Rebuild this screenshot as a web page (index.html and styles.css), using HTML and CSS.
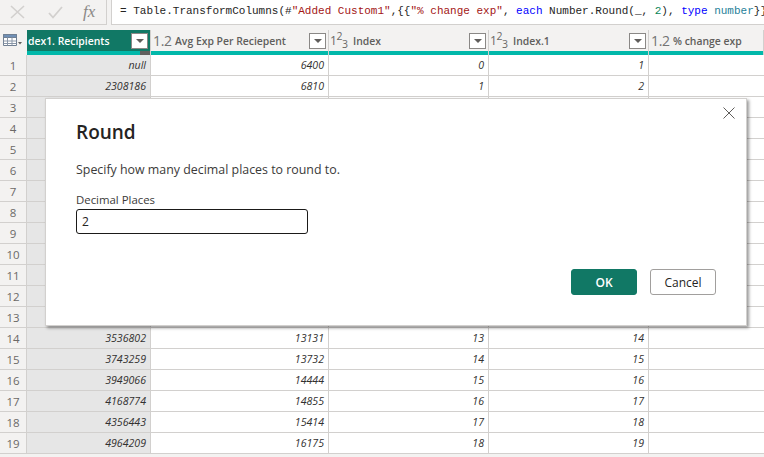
FILE: index.html
```html
<!DOCTYPE html>
<html lang="en">
<head>
<meta charset="utf-8">
<title>Round</title>
<link rel="stylesheet" href="styles.css">
</head>
<body>
<div class="page">
  <div class="formula-bar">
    <div class="formula-tools">
      <svg class="tool" width="16" height="14" viewBox="0 0 16 14"><path d="M1 1l13 12M14 1L1 13" fill="none" stroke="#d2d0ce" stroke-width="1.6"/></svg>
      <svg class="tool" width="15" height="14" viewBox="0 0 15 14"><path d="M1 8l4 4.500L14 2" fill="none" stroke="#d2d0ce" stroke-width="1.8"/></svg>
      <span class="fx">fx</span>
    </div>
    <div class="formula">= Table.TransformColumns(#<span class="str">"Added Custom1"</span>,{{<span class="str">"% change exp"</span>, <span class="kw">each</span> Number.Round(_, <span class="num">2</span>), <span class="kw">type</span> <span class="typ">number</span>}}</div>
  </div>
  <table class="grid">
    <colgroup><col class="c0"><col class="c1"><col class="c2"><col class="c3"><col class="c4"><col class="c5"></colgroup>
    <thead>
      <tr class="head">
        <th class="corner"><svg width="20" height="14" viewBox="0 0 20 14"><path d="M.500.500h13v11H.500z" fill="#fff" stroke="#6f7f92"/><path d="M.500.500h13v3H.500z" fill="#6f8fb5" stroke="#6f7f92"/><path d="M.500 7h13M.500 9.500h13M4.500 3.500v8M9 3.500v8" stroke="#8a97a8" fill="none"/><path d="M15 8h4l-2 2.500z" fill="#605e5c"/></svg></th>
        <th class="selected"><div class="hc"><span class="name sel-name">dex1. Recipients</span><span class="filter"></span></div></th>
        <th><div class="hc"><span class="dec">1.2</span><span class="name">Avg Exp Per Reciepent</span><span class="filter"></span></div></th>
        <th><div class="hc"><span class="int">1<sup>2</sup><sub>3</sub></span><span class="name">Index</span><span class="filter"></span></div></th>
        <th><div class="hc"><span class="int">1<sup>2</sup><sub>3</sub></span><span class="name">Index.1</span><span class="filter"></span></div></th>
        <th><div class="hc"><span class="dec">1.2</span><span class="name">% change exp</span></div></th>
      </tr>
      <tr class="quality">
        <th class="q0"></th>
        <th class="q q1"><span class="qgap"></span></th>
        <th class="q"></th><th class="q"></th><th class="q"></th><th class="q"></th>
      </tr>
    </thead>
    <tbody>
      <tr><th>1</th><td class="sel">null</td><td>6400</td><td>0</td><td>1</td><td></td></tr>
      <tr><th>2</th><td class="sel">2308186</td><td>6810</td><td>1</td><td>2</td><td></td></tr>
      <tr><th>3</th><td class="sel"></td><td></td><td></td><td></td><td></td></tr>
      <tr><th>4</th><td class="sel"></td><td></td><td></td><td></td><td></td></tr>
      <tr><th>5</th><td class="sel"></td><td></td><td></td><td></td><td></td></tr>
      <tr><th>6</th><td class="sel"></td><td></td><td></td><td></td><td></td></tr>
      <tr><th>7</th><td class="sel"></td><td></td><td></td><td></td><td></td></tr>
      <tr><th>8</th><td class="sel"></td><td></td><td></td><td></td><td></td></tr>
      <tr><th>9</th><td class="sel"></td><td></td><td></td><td></td><td></td></tr>
      <tr><th>10</th><td class="sel"></td><td></td><td></td><td></td><td></td></tr>
      <tr><th>11</th><td class="sel"></td><td></td><td></td><td></td><td></td></tr>
      <tr><th>12</th><td class="sel"></td><td></td><td></td><td></td><td></td></tr>
      <tr><th>13</th><td class="sel"></td><td></td><td></td><td></td><td></td></tr>
      <tr><th>14</th><td class="sel">3536802</td><td>13131</td><td>13</td><td>14</td><td></td></tr>
      <tr><th>15</th><td class="sel">3743259</td><td>13732</td><td>14</td><td>15</td><td></td></tr>
      <tr><th>16</th><td class="sel">3949066</td><td>14444</td><td>15</td><td>16</td><td></td></tr>
      <tr><th>17</th><td class="sel">4168774</td><td>14855</td><td>16</td><td>17</td><td></td></tr>
      <tr><th>18</th><td class="sel">4356443</td><td>15414</td><td>17</td><td>18</td><td></td></tr>
      <tr><th>19</th><td class="sel">4964209</td><td>16175</td><td>18</td><td>19</td><td></td></tr>
    </tbody>
  </table>
  <div class="dialog">
    <svg class="close" width="12" height="12" viewBox="0 0 12 12"><path d="M.500.500l11 11M11.500.500l-11 11" fill="none" stroke="#605e5c" stroke-width="1"/></svg>
    <h1 class="title">Round</h1>
    <p class="desc">Specify how many decimal places to round to.</p>
    <label class="label" for="places">Decimal Places</label>
    <input class="input" id="places" type="text" value="2">
    <div class="actions">
      <button class="btn primary" type="button">OK</button>
      <button class="btn" type="button">Cancel</button>
    </div>
  </div>
</div>
</body>
</html>
```
FILE: styles.css
```css
* { box-sizing: border-box; }
html, body { margin: 0; padding: 0; background: #fff; }
.page {
  position: relative;
  width: 764px;
  height: 457px;
  overflow: hidden;
  background: #f3f2f1;
  font-family: "Open Sans", "Noto Sans", sans-serif;
}
.formula-bar { display: flex; height: 30px; background: #f3f2f1; }
.formula-tools {
  display: flex;
  align-items: center;
  width: 107px;
  height: 25px;
  padding: 0 0 0 10px;
  gap: 22px;
  background: #f3f2f1;
  border-right: 1px solid #d2d0ce;
  border-bottom: 1px solid #d2d0ce;
}
.fx { font-family: "Liberation Serif", serif; font-style: italic; font-size: 17px; color: #8a8886; margin-left: -2px; }
.formula {
  flex: 1;
  height: 25px;
  margin-left: 4px;
  padding: 3px 0 0 8px;
  background: #fff;
  border-left: 1px solid #d2d0ce;
  border-bottom: 1px solid #d2d0ce;
  font-family: "Liberation Mono", monospace;
  font-size: 11px;
  line-height: 16px;
  white-space: nowrap;
  overflow: hidden;
  color: #252423;
}
.str { color: #a31515; }
.kw { color: #0000ff; }
.num { color: #098658; }
.typ { color: #267f99; }
.grid { border-collapse: separate; border-spacing: 0; table-layout: fixed; width: 764px; }
.c0 { width: 27px; } .c1 { width: 124px; } .c2 { width: 178px; } .c3 { width: 160px; } .c4 { width: 160px; }
.head th {
  height: 21px;
  padding: 0;
  background: #f3f2f1;
  border-right: 1px solid #d2d0ce;
  font-size: 10.4px;
  font-weight: 600;
  color: #605e5c;
  text-align: left;
}
.head th.corner { border-right: 0; padding-left: 3px; line-height: 0; }
.head th.selected { background: #117865; color: #fff; }
.hc { display: flex; align-items: center; height: 21px; padding-right: 2px; overflow: hidden; white-space: nowrap; }
.hc > .name { flex: 1; }
.hc > .sel-name { padding-left: 1px; }
.dec { flex: none; width: 24px; padding-left: 2px; font-size: 14px; letter-spacing: -.3px; font-weight: 400; color: #737373; }
.int { flex: none; width: 24px; padding-left: 1px; font-size: 12px; letter-spacing: -.4px; font-weight: 400; color: #6b6967; line-height: 12px; }
.int sup, .int sub { font-size: 10.5px; line-height: 0; }
.filter { position: relative; flex: none; width: 17px; height: 16px; background: #fff; border: 1px solid #8a8886; }
.filter::after {
  content: "";
  position: absolute;
  left: 4px;
  top: 5px;
  border-left: 4px solid transparent;
  border-right: 4px solid transparent;
  border-top: 4px solid #605e5c;
}
.quality th { height: 4px; padding: 0; line-height: 0; }
.q { background: #01b8aa; border-right: 1px solid #d2d0ce; }
.q0 { background: #f3f2f1; }
.q1 { position: relative; }
.qgap { position: absolute; right: 0; top: 0; width: 10px; height: 4px; background: #605e5c; }
tbody th {
  height: 21px;
  padding: 0;
  background: #f3f2f1;
  border-right: 1px solid #d2d0ce;
  border-bottom: 1px solid #d2d0ce;
  font-size: 11.5px;
  font-weight: 400;
  color: #6b6967;
  text-align: center;
}
tbody td {
  height: 21px;
  padding: 0 4px 0 0;
  background: #fff;
  border-right: 1px solid #d2d0ce;
  border-bottom: 1px solid #d2d0ce;
  font-size: 10.6px;
  font-style: italic;
  color: #323130;
  text-align: right;
}
tbody td.sel { background: #e6e6e6; }
tbody td:last-child { border-right: 0; }
.dialog {
  position: absolute;
  left: 45px;
  top: 98px;
  width: 702px;
  height: 228px;
  padding: 20px 30px 0;
  background: #fff;
  border: 1px solid #d2d0ce;
  box-shadow: 2px 2px 3px rgba(0, 0, 0, .4);
}
.close { position: absolute; right: 11px; top: 8px; }
.title { margin: 0; font-size: 19px; line-height: 26px; font-weight: 600; color: #252423; }
.desc { margin: 16px 0 0; font-size: 12.4px; line-height: 18px; color: #3b3a39; }
.label { display: block; margin-top: 13px; font-size: 11.4px; line-height: 15px; color: #3b3a39; }
.input {
  display: block;
  width: 232px;
  height: 25px;
  margin-top: 2px;
  padding: 0 5px;
  border: 1px solid #1b1a19;
  border-radius: 3px;
  background: #fff;
  font-family: inherit;
  font-size: 12px;
  color: #252423;
  outline: 0;
}
.actions { display: flex; justify-content: flex-end; gap: 13px; margin-top: 35px; }
.btn {
  width: 66px;
  height: 26px;
  padding: 0;
  border: 1px solid #a19f9d;
  border-radius: 3px;
  background: #fff;
  font-family: inherit;
  font-size: 12px;
  font-weight: 400;
  color: #252423;
}
.btn.primary { background: #117865; border-color: #117865; color: #fff; font-weight: 600; }
```
